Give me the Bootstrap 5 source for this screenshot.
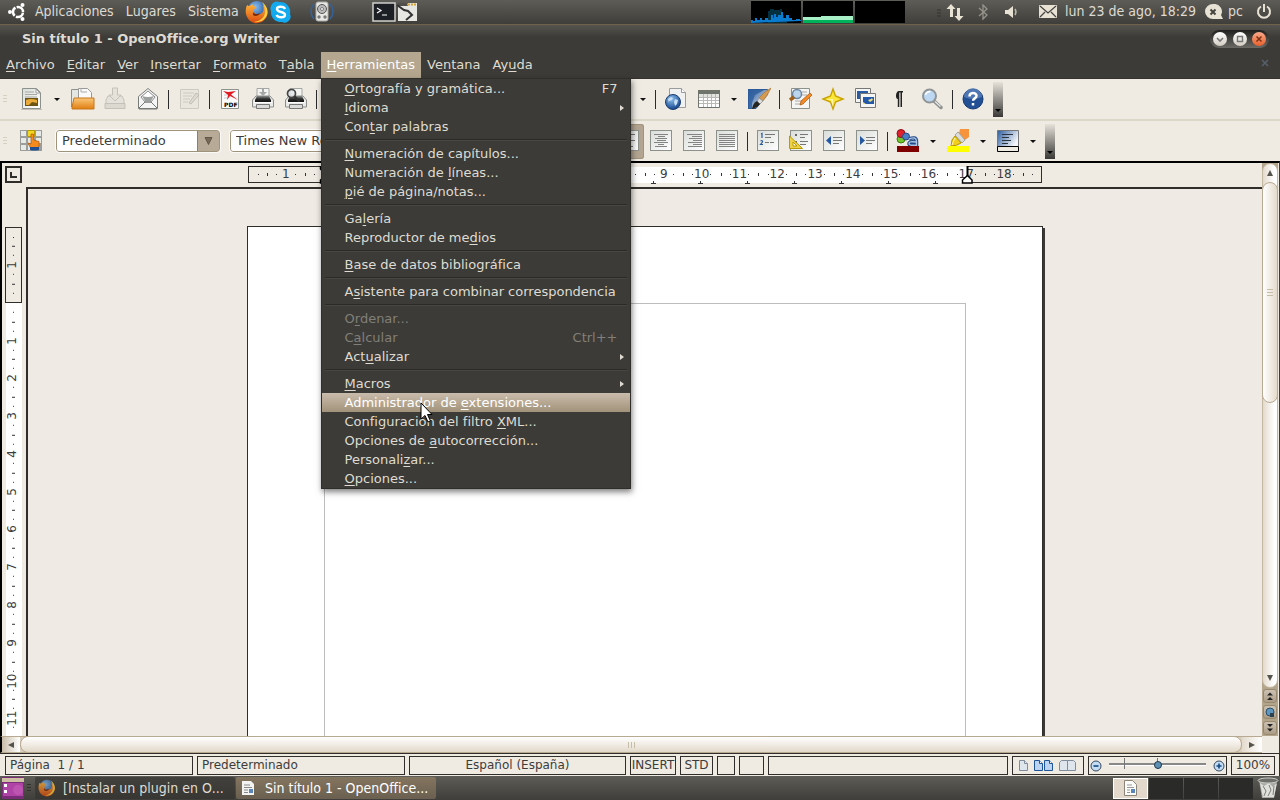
<!DOCTYPE html>
<html lang="es">
<head>
<meta charset="utf-8">
<meta name="viewport" content="width=device-width, initial-scale=1">
<title>Sin título 1 - OpenOffice.org Writer</title>
<link href="https://cdn.jsdelivr.net/npm/bootstrap@5.3.0/dist/css/bootstrap.min.css" rel="stylesheet">
<style>
:root{--dark:#3c3b37;--cream:#dfdbd2;--beige:#efebe3;--ink:#2f2e2b;--sand:#b5a78f}
body{font:13px/19px "DejaVu Sans",sans-serif;color:#3c3c3c;background:var(--beige)}
.no-kern{font-kerning:none}
.desk{height:100vh;min-width:1100px}
.btn{--bs-btn-padding-x:0;--bs-btn-padding-y:0;--bs-btn-border-width:0;--bs-btn-border-radius:0;--bs-btn-font-size:13px;--bs-btn-line-height:19px}
svg{display:block;flex:none}
.panel-bar{height:24px;background:linear-gradient(#5d5c57,#3f3e3a);color:var(--cream);font:14px/20px "DejaVu Sans Condensed","DejaVu Sans",sans-serif;font-kerning:none}
.panel-bar a{color:inherit;text-decoration:none;padding-bottom:2px}
.panel-top{height:25px;border-bottom:1px solid #6f614a}
.load{width:50px;height:22px;background:#000}
.title-bar{height:27px;background:linear-gradient(#55544f,var(--dark) 12px);color:var(--cream);font-weight:700}
.pill{width:59px;height:18px;border-radius:9px;background:linear-gradient(#20201e,#6b6a65);padding:0 3px}
.wbtn{width:14px;height:14px;border-radius:50%!important;background:linear-gradient(#fff,#d2ccc2)!important}
.wbtn.shut{background:linear-gradient(#f9a98a,#e8602c)!important}
.menu-bar{height:27px;background:var(--dark);border-bottom:1px solid #33322f}
.menu-bar>.nav-item>.nav-link{padding:3px 6px 4px;color:var(--cream);line-height:19px}
.menu-bar>.nav-item>.nav-link.show{background:var(--sand);color:#fff}
u{text-decoration-thickness:1px;text-underline-offset:2px}
.tools-menu.dropdown-menu{--bs-dropdown-min-width:310px;width:310px;top:26px;left:0;padding:0;border:1px solid #2f2e2b;border-radius:0;background:var(--dark);font-size:13px;box-shadow:1px 3px 6px rgba(0,0,0,.5);z-index:20}
.tools-menu .dropdown-item{padding:0 12px 0 23px;height:19px;line-height:19px;color:var(--cream)}
.tools-menu .dropdown-item.active{background:linear-gradient(#c9bcab,#a2927a);color:#fff}
.tools-menu .dropdown-item.disabled{color:#817f79}
.tools-menu .dropdown-divider{margin:3px 3px;height:2px;border:0;background:linear-gradient(#2b2a27 50%,#484742 50%);opacity:1}
.sub-arrow{width:0;height:0;border:3px solid transparent;border-left:4px solid var(--cream);border-right:0;margin-right:-6px}
.pointer{position:absolute;left:98px;top:323px;z-index:21;pointer-events:none}
.tool-row{height:40px}
.tool-row+.tool-row{border-top:2px solid;border-image:linear-gradient(#dcd8c8 50%,#f8f6f0 50%) 2;height:42px}
.grip{width:15px;height:8px;padding-left:3px}
.grip::before{content:"";display:block;width:4px;height:8px;background:repeating-linear-gradient(#d6d0c0 0 1px,transparent 1px 3px)}
.tb{width:33px;height:35px}
.tb svg{margin:auto}
.tb.pressed{background:#b3a591;border-radius:3px!important;box-shadow:inset 0 0 0 1px #a3947d}
.dd{width:17px;height:35px}
.dd::before{content:"";display:block;width:0;margin:auto;border:3px solid transparent;border-top:3px solid #111;border-bottom:0}
.bar-sep{width:8px;height:19px;background:linear-gradient(#2b2b2b,#2b2b2b) 4px 0/1px 100% no-repeat}
.more{width:10px;height:35px;margin-left:4px;background:linear-gradient(#e6e2da,#3a3936);padding-top:22px}
.more::before{content:"";display:block;width:0;margin:auto;border:3px solid transparent;border-top:3px solid #000;border-bottom:0}
.box-pick{height:22px;border:1px solid #a0937c;border-radius:3px;font-size:13px;line-height:18px;padding:0 24px 0 5px;color:#3c3c3c;appearance:none;outline:1px solid #fbfaf7;
background:url("data:image/svg+xml,%3Csvg xmlns='http://www.w3.org/2000/svg' width='9' height='8'%3E%3Cpath d='M1 .5h7L4.500 7.500z' fill='%23776b58' stroke='%23554b3c' stroke-width='.8'/%3E%3C/svg%3E") right 6px center no-repeat,linear-gradient(90deg,#8f8069 1px,#b7aa97 1px) right 0 top 0/22px 100% no-repeat,#fff}
.hold-a{width:314px}.hold-b{width:231px}
.work{border-top:2px solid #000;border-left:2px solid #000;border-right:1px solid #3c3b37;min-height:0}
.ruler-row{height:24px}
.corner{width:17px;height:17px;border:2px solid var(--ink);margin:3px 6px 0 3px}
.corner::before{content:"";display:block;width:7px;height:6px;margin:3px 0 2px 3px;border:solid var(--ink);border-width:0 0 2px 2px}
.h-ruler{width:794px;height:17px;display:grid}
.h-ruler>*{grid-area:1/1}
.edge{border:1px solid var(--ink)}
.inner{background:#fff;margin-top:1px}
.tabs-line{height:4px;margin:14px 0 -2px;background:repeating-linear-gradient(90deg,#333 0 1px,transparent 1px 47px) 0 0/100% 3px no-repeat,repeating-linear-gradient(90deg,#333 0 3px,transparent 3px 45px,#333 45px 47px) 0 2px/100% 1px no-repeat}
.marks{padding:0 19px;font-size:12px;line-height:17px;background:linear-gradient(#333,#333) 10px 8px/1px 1px no-repeat,linear-gradient(#333,#333) right 18px top 7px/1px 3px no-repeat,linear-gradient(#333,#333) right 9px top 8px/1px 1px no-repeat}
.mark-cell{flex:1 1 0;text-align:center;background:linear-gradient(#333,#333) 0 7px/1px 3px no-repeat,linear-gradient(#333,#333) 25% 8px/1px 1px no-repeat,linear-gradient(#333,#333) 75% 8px/1px 1px no-repeat}
.stop-mark{position:absolute;left:713px;top:0}
.start-mark{position:absolute;left:71px;top:0}
.v-col{width:24px;overflow:hidden;padding:40px 5px 0 3px}
.v-ruler{height:1124px;width:17px;display:grid}
.v-ruler>*{grid-area:1/1}
.marks-v{padding:19px 0 47px;font-size:12px;line-height:15px;background:linear-gradient(#333,#333) 8px 10px/1px 1px no-repeat}
.marks-v .mark-cell{writing-mode:vertical-rl;transform:rotate(180deg);width:17px;background:linear-gradient(#333,#333) 7px 100%/3px 1px no-repeat,linear-gradient(#333,#333) 8px 25%/1px 1px no-repeat,linear-gradient(#333,#333) 8px 75%/1px 1px no-repeat}
.canvas{border:solid var(--ink);border-width:2px 0 0 2px;overflow:hidden;background:#efeae4;padding-top:37px}
.sheet{width:796px;height:1123px;background:#fff;border:1px solid var(--ink);box-shadow:2px 2px 0 #3a3936;padding:76px}
.text-frame{height:100%;border:1px solid #bdbdbd}
.v-scroll{width:16px;background:#b3a48c;margin-right:1px}
.v-track{background:linear-gradient(90deg,#e3dacd,#fff 80%);border-radius:8px;border:1px solid #c4b79f}
.v-thumb{height:221px;border:1px solid #b8aa90;border-radius:8px;background:linear-gradient(90deg,#fff,#e4dacb);margin:0 -1px}
.sc{width:14px;height:18px}
.sc svg{margin:auto}
.jump{height:14px;width:14px;margin:1px;border:1px solid #978870!important;border-radius:3px!important;background:linear-gradient(#cdc2b2,#ab9c86)!important}
.jump svg{margin:auto}
.h-scroll{height:17px;background:#d9cfc0;border:solid #b8aa90;border-width:1px 0;border-left:2px solid #000}
.h-thumb{border:1px solid #b8aa90;border-radius:8px;background:linear-gradient(#fff,#e2d8c9);margin:-1px 0}
.h-end{width:18px;height:15px;background:linear-gradient(90deg,#c9bda9,#fff)}
.h-end.last{width:20px;background:linear-gradient(90deg,#e3dacd,#fff)}
.v-lines{width:7px;height:6px;background:repeating-linear-gradient(90deg,#c6bca8 0 1px,transparent 1px 3px)}
.h-lines{width:6px;height:7px;background:repeating-linear-gradient(#c6bca8 0 1px,transparent 1px 3px)}
.status{height:23px;border-top:1px solid var(--ink);padding:2px 4px 1px 5px;gap:4px;font-size:12px;line-height:17px;border-right:1px solid var(--ink)}
.cell{border:1px solid var(--ink);white-space:pre;overflow:hidden;height:19px}
.zoomer{appearance:none;width:97px;height:15px;margin:0 7px;background:linear-gradient(#777,#777) 15px 0/1px 11px no-repeat,linear-gradient(#777,#777) 48px 0/1px 11px no-repeat,linear-gradient(#888 2px,#fff 2px) 0 5px/100% 3px no-repeat}
.zoomer::-webkit-slider-thumb{appearance:none;width:8px;height:8px;border-radius:50%;border:1px solid #1d3a50;background:#5e90b4;margin-top:-2px}
.task{height:22px;width:200px;border-radius:2px!important;background:linear-gradient(#42413d,#373632)!important;color:var(--cream)!important;font:14px/22px "DejaVu Sans Condensed","DejaVu Sans",sans-serif!important;font-kerning:none!important;text-align:left!important}
.task.current{background:linear-gradient(#84755f,#6a5f50)!important;color:#fff!important}
.pg{width:34px;height:21px;background:#2a2a28!important}
.pg.here{background:#e2d8cb!important;border:1px solid #fff!important;width:35px}
</style>
</head>
<body>
<svg width="0" height="0" class="position-absolute" aria-hidden="true">
<defs>
<linearGradient id="gPaper" x1="0" y1="0" x2="1" y2="1"><stop offset="0" stop-color="#d9ddd9"/><stop offset="1" stop-color="#fff"/></linearGradient>
<linearGradient id="gFold" x1="0" y1="0" x2="0" y2="1"><stop offset="0" stop-color="#fbc778"/><stop offset="1" stop-color="#e07e14"/></linearGradient>
<linearGradient id="gBlue" x1="0" y1="0" x2="1" y2="1"><stop offset="0" stop-color="#2d5d9f"/><stop offset="1" stop-color="#e3ebf4"/></linearGradient>
<linearGradient id="gBlueH" x1="0" y1="0" x2="1" y2=".5"><stop offset="0" stop-color="#2d5d9f"/><stop offset="1" stop-color="#f4f6fa"/></linearGradient>
<linearGradient id="gMetal" x1="0" y1="0" x2="0" y2="1"><stop offset="0" stop-color="#8b8e8c"/><stop offset=".5" stop-color="#2c2d2d"/><stop offset="1" stop-color="#111"/></linearGradient>
<radialGradient id="gGlobe" cx=".4" cy=".3" r=".7"><stop offset="0" stop-color="#8cc0f0"/><stop offset="1" stop-color="#16458c"/></radialGradient>
<linearGradient id="gFox" x1="0" y1="0" x2="0" y2="1"><stop offset="0" stop-color="#ffb43a"/><stop offset="1" stop-color="#d9480f"/></linearGradient>
<symbol id="sheetIcon" viewBox="0 0 24 24"><rect x="1.500" y="1.500" width="21" height="20" fill="url(#gPaper)" stroke="#8d918c"/></symbol>
<symbol id="printer" viewBox="0 0 24 24"><path d="M6 12V1.500h12V12" fill="#f4f4f2" stroke="#a5a7a4"/><path d="M1.500 13l3.500-4h14l3.500 4v7h-21z" fill="#e9e9e7" stroke="#8b8e8a"/><path d="M4 13l2-4h12l2 4v2H4z" fill="url(#gMetal)"/><path d="M3 15.500h18" stroke="#fff"/><path d="M5.500 17.500h13v4h-13z" fill="#dadad8" stroke="#777"/></symbol>
<symbol id="firefox" viewBox="0 0 24 24"><circle cx="12" cy="11" r="10" fill="url(#gGlobe)"/><path d="M2 5c1 1 2 1 3 1C7 3 9 5 8 6c2 0 3 1 3 2-2 1-3 2-2 4 1 3 5 4 8 1 2-2 2-5 1-8 4 3 6 8 3 13-4 6-12 7-17 2C0 15 0 10 2 5z" fill="url(#gFox)"/><path d="M17 2c4 3 6 7 5.500 11C21 20 15 23 9 22c6-1 10-4 11-9 1-4-1-8-3-11z" fill="#ffcf3f"/><path d="M8 12c1 2 4 3 7 1-1 3-5 4-7 2z" fill="#7c2b08"/></symbol>
</defs>
</svg>
<div class="desk d-flex flex-column overflow-hidden">

<!-- desktop panel -->
<header class="panel-bar panel-top d-flex align-items-center flex-shrink-0">
  <svg width="18" height="18" viewBox="0 0 18 18" style="margin-left:8px"><circle cx="10" cy="9" r="5" fill="none" stroke="#fff" stroke-width="2.500" stroke-dasharray="9.200 1.300" stroke-dashoffset="-.6"/><circle cx="2" cy="9" r="2" fill="#fff"/><circle cx="14.500" cy="2" r="2" fill="#fff"/><circle cx="14.500" cy="16" r="2" fill="#fff"/></svg>
  <nav class="d-flex" style="gap:12px;margin-left:9px"><a href="#">Aplicaciones</a><a href="#">Lugares</a><a href="#">Sistema</a></nav>
  <svg width="24" height="24" style="margin-left:6px"><use href="#firefox"/></svg>
  <svg width="22" height="22" viewBox="0 0 22 22" style="margin-left:1px"><path d="M1 5a6 6 0 0 1 8-4 10 10 0 0 1 11 12 6 6 0 0 1-8 8A10 10 0 0 1 1 10 6 6 0 0 1 1 5z" fill="#12a9ee"/><path d="M15 8c-1-3-8-3-8 0 0 4 8 2 8 6 0 3-7 3-8.500 0" fill="none" stroke="#fff" stroke-width="2.400"/></svg>
  <svg width="24" height="22" viewBox="0 0 24 22" style="margin-left:18px"><path d="M4 3a11 11 0 0 0 0 15M20 3a11 11 0 0 1 0 15" stroke="#35619b" stroke-width="1.500" fill="none"/><rect x="6" y="1" width="12" height="19" rx="2" fill="#e8e8e4" stroke="#aaa"/><circle cx="12" cy="8" r="4.500" fill="#bbb" stroke="#555"/><circle cx="12" cy="8" r="1.500" fill="#fff" stroke="#777"/><circle cx="9" cy="16" r="1.700" fill="#777"/><circle cx="15" cy="16" r="1.700" fill="#777"/></svg>
  <svg width="24" height="20" viewBox="0 0 24 20" style="margin-left:38px"><rect x="1" y="1" width="22" height="18" fill="#1c2024" stroke="#d0d0cc" stroke-width="1.500"/><path d="M5 6l4 2.500L5 11M10 13h5" stroke="#fff" fill="none" stroke-width="1.200"/></svg>
  <svg width="22" height="20" viewBox="0 0 22 20"><rect x="2" y="1" width="19" height="18" fill="#e6e6e2"/><path d="M2 1h10v3H2z" fill="#4f4e4a"/><path d="M11 1.500h3v2h-3zM15 1.500h2v2h-2zM18 1.500h2v2h-2z" fill="#d8a233"/><path d="M1 3l7 5 4 1 4 4-6 5" fill="none" stroke="#333" stroke-width="2"/></svg>
  <div class="ms-auto d-flex align-items-center">
    <div class="d-flex" style="gap:2px">
      <div class="load"><svg width="50" height="22"><path d="M17 22V10h2V8h4V9h6V8h2v6h2v3h3v5z" fill="#04303f"/><path d="M0 22v-3h2v1h2v-3h2v2h3v-2h2v2h3v-2h3v2h3v-5h2v3h1v-4h2v3h2v-2h3v-3h2v6h3v-3h3v3h3v2h4v-1h4v1h3v1z" fill="#0b7bd0"/></svg></div>
      <div class="load"><svg width="50" height="22"><path d="M0 16h18v-1h32v4H0z" fill="#a7f0c8"/><path d="M0 19h50v3H0z" fill="#00b25a"/></svg></div>
      <div class="load"></div>
    </div>
    <svg width="60" height="22" viewBox="0 0 60 22"><path d="M32 9h4M32 12h4M32 15h4" stroke="#33322f"/><path d="M46 3l4.500 5H48v8h-3V8h-3.500zM54 20l-4.500-5H52V7h3v8h3.500z" fill="#e8e2d4"/></svg>
    <svg width="10" height="16" viewBox="0 0 10 16" style="margin-left:13px"><path d="M1 4l8 7-4 4V1l4 4-8 7" fill="none" stroke="#97948b" stroke-width="1.300"/></svg>
    <svg width="16" height="14" viewBox="0 0 16 14" style="margin-left:16px"><path d="M1 5h3l5-4v12L4 9H1z" fill="#e8e2d4"/><path d="M11 4q2 3 0 6" stroke="#bbb6aa" fill="none" stroke-width="1.500"/></svg>
    <svg width="18" height="14" viewBox="0 0 18 14" style="margin-left:19px"><rect width="18" height="13" rx="1" fill="#e8e2d4"/><path d="M1 1l8 7 8-7M1 12l5-5M17 12l-5-5" fill="none" stroke="#44433f" stroke-width="1.200"/></svg>
    <a href="#" style="margin-left:8px">lun 23 de ago, 18:29</a>
    <svg width="18" height="16" viewBox="0 0 18 16" style="margin-left:9px"><path d="M8 0a8 7.500 0 0 1 8 11l2 4H8A8 7.500 0 0 1 8 0z" fill="#e8e2d4"/><path d="M5.500 5.500l5 5M10.500 5.500l-5 5" stroke="#44433f" stroke-width="2"/></svg>
    <a href="#" style="margin-left:5px">pc</a>
    <svg width="16" height="16" viewBox="0 0 16 16" style="margin:0 8px 0 13px"><path d="M5 2.500a6 6 0 1 0 6 0M8 0v8" fill="none" stroke="#e8e2d4" stroke-width="2"/></svg>
  </div>
</header>

<!-- window title -->
<div class="title-bar d-flex align-items-center justify-content-between flex-shrink-0">
  <div style="margin-left:22px">Sin título 1 - OpenOffice.org Writer</div>
  <div class="pill d-flex align-items-center justify-content-between" style="margin-right:11px">
    <button class="btn wbtn" aria-label="Minimizar"><svg width="14" height="14"><path d="M4 6l3 3 3-3" fill="none" stroke="#777" stroke-width="1.600"/></svg></button>
    <button class="btn wbtn" aria-label="Maximizar"><svg width="14" height="14"><path d="M4.500 4.500h5v5h-5z" fill="none" stroke="#777" stroke-width="1.400"/></svg></button>
    <button class="btn wbtn shut" aria-label="Cerrar"><svg width="14" height="14"><path d="M4.500 4.500l5 5M9.500 4.500l-5 5" stroke="#7a3216" stroke-width="1.500"/></svg></button>
  </div>
</div>

<!-- menu bar -->
<ul class="menu-bar nav flex-nowrap flex-shrink-0 position-relative">
  <li class="nav-item"><a class="nav-link" href="#"><u>A</u>rchivo</a></li>
  <li class="nav-item"><a class="nav-link" href="#"><u>E</u>ditar</a></li>
  <li class="nav-item"><a class="nav-link" href="#"><u>V</u>er</a></li>
  <li class="nav-item"><a class="nav-link" href="#"><u>I</u>nsertar</a></li>
  <li class="nav-item"><a class="nav-link" href="#"><u>F</u>ormato</a></li>
  <li class="nav-item no-kern"><a class="nav-link" href="#">T<u>a</u>bla</a></li>
  <li class="nav-item dropdown">
    <a class="nav-link show" href="#" aria-expanded="true"><u>H</u>erramientas</a>
    <ul class="tools-menu dropdown-menu show">
      <li><a class="dropdown-item d-flex justify-content-between" href="#"><span><u>O</u>rtografía y gramática...</span><span>F7</span></a></li>
      <li><a class="dropdown-item d-flex justify-content-between align-items-center" href="#"><span><u>I</u>dioma</span><span class="sub-arrow"></span></a></li>
      <li><a class="dropdown-item" href="#">Con<u>t</u>ar palabras</a></li>
      <li><hr class="dropdown-divider"></li>
      <li><a class="dropdown-item" href="#"><u>N</u>umeración de capítulos...</a></li>
      <li><a class="dropdown-item" href="#">Numeración de <u>l</u>íneas...</a></li>
      <li><a class="dropdown-item" href="#"><u>p</u>ié de página/notas...</a></li>
      <li><hr class="dropdown-divider"></li>
      <li><a class="dropdown-item" href="#">Ga<u>l</u>ería</a></li>
      <li><a class="dropdown-item" href="#">Reproductor de me<u>d</u>ios</a></li>
      <li><hr class="dropdown-divider"></li>
      <li><a class="dropdown-item" href="#"><u>B</u>ase de datos bibliográfica</a></li>
      <li><hr class="dropdown-divider"></li>
      <li><a class="dropdown-item" href="#">A<u>s</u>istente para combinar correspondencia</a></li>
      <li><hr class="dropdown-divider"></li>
      <li><a class="dropdown-item disabled" href="#">O<u>r</u>denar...</a></li>
      <li><a class="dropdown-item disabled d-flex justify-content-between" href="#"><span>C<u>a</u>lcular</span><span>Ctrl++</span></a></li>
      <li><a class="dropdown-item d-flex justify-content-between align-items-center" href="#"><span>Act<u>u</u>alizar</span><span class="sub-arrow"></span></a></li>
      <li><hr class="dropdown-divider"></li>
      <li><a class="dropdown-item d-flex justify-content-between align-items-center" href="#"><span><u>M</u>acros</span><span class="sub-arrow"></span></a></li>
      <li><a class="dropdown-item active" href="#">Administrador de <u>e</u>xtensiones...</a></li>
      <li><a class="dropdown-item" href="#">Configuración del filtro <u>X</u>ML...</a></li>
      <li><a class="dropdown-item" href="#">Opciones de <u>a</u>utocorrección...</a></li>
      <li><a class="dropdown-item" href="#">Personali<u>z</u>ar...</a></li>
      <li><a class="dropdown-item" href="#"><u>O</u>pciones...</a></li>
      <li class="pointer"><svg width="14" height="22" viewBox="0 0 14 22"><path d="M1 1v16l4-3.500 3 6.500 2.500-1-3-6.500H12z" fill="#fff" stroke="#000"/></svg></li>
    </ul>
  </li>
  <li class="nav-item"><a class="nav-link" href="#">Ve<u>n</u>tana</a></li>
  <li class="nav-item"><a class="nav-link" href="#">Ay<u>u</u>da</a></li>
  <li class="nav-item ms-auto align-self-center"><button class="btn d-block mb-1" aria-label="Cerrar documento" style="margin-right:11px"><svg width="8" height="8"><path d="M1 1l6 6M7 1L1 7" stroke="#56606b" stroke-width="1.600"/></svg></button></li>
</ul>

<!-- standard toolbar -->
<div class="tool-row d-flex align-items-center flex-shrink-0" role="toolbar">
  <div class="grip"></div>
  <button class="btn tb" aria-label="Nuevo"><svg width="24" height="24"><path d="M2.500 1.500h14l4 4v16h-18z" fill="url(#gPaper)" stroke="#8d918c"/><path d="M16 2l4 4h-4z" fill="#fff" stroke="#999"/><path d="M5 5h9M5 7.500h12M5 10h12" stroke="#a5a8a4"/><path d="M5 11h13v8H5z" fill="#6d5314"/><path d="M6 13q5-2 11 0v3l-5-1-3 3H6z" fill="#e9aa3a"/><path d="M1 22.500h21" stroke="#c2beb5"/></svg></button>
  <button class="btn dd" aria-label="Más tipos"></button>
  <button class="btn tb" aria-label="Abrir"><svg width="26" height="24"><path d="M2.500 20V2.500h7l2 2v10" fill="#e4e6e4" stroke="#8d918c"/><path d="M9.500 1.500h9l4 4V14h-13z" fill="#fafafa" stroke="#999"/><path d="M12 1v4h6" fill="none" stroke="#aaa"/><path d="M3 20L5 11h20v11H3z" fill="url(#gFold)" stroke="#c8761b"/></svg></button>
  <button class="btn tb" aria-label="Guardar" disabled><svg width="24" height="24"><path d="M3 13l2-4h14l2 4v8H3z" fill="#e0ded7" stroke="#aeaba3"/><path d="M9.500 1h5v7H18l-6 6-6-6h3.500z" fill="#e0ded6" stroke="#aeaba3"/><path d="M2 16.500h20v5H2z" fill="#d3d0c8" stroke="#aeaba3"/></svg></button>
  <button class="btn tb" aria-label="Correo"><svg width="24" height="24"><path d="M2.500 9.500L12 1.500l9.500 8v12h-19z" fill="#f4f5f4" stroke="#777b78"/><path d="M5 10l7-6 7 6-4 5H9z" fill="#fff" stroke="#888"/><path d="M6 9q6 2 12 0l-3 5H9z" fill="#9da19f"/><path d="M3 21l6-6h6l6 6" fill="none" stroke="#777b78"/><path d="M3 22.500h18" stroke="#b4b1a9"/></svg></button>
  <div class="bar-sep"></div>
  <button class="btn tb" aria-label="Modo de edición" disabled><svg width="24" height="24"><path d="M3.500 2.500h18v19h-18z" fill="#e6e4dc" stroke="#bcb9b0"/><path d="M6 6h11M6 9h9M6 12h7M6 15h5" stroke="#bbb9b1"/><path d="M12 16l7-10 3 2-8 9z" fill="#d5d2c9" stroke="#a9a69e"/></svg></button>
  <div class="bar-sep"></div>
  <button class="btn tb" aria-label="Exportar a PDF"><svg width="24" height="24"><path d="M3.500 2.500h17v19h-17z" fill="#fafafa" stroke="#8d918c"/><path d="M5 4l5 1 8-1-5 3.500 7 5.500-8-4-3 4 1-5z" fill="#e21a22"/><path d="M6 8h3M6 11h3" stroke="#ccc"/><text x="6" y="20" font-family="DejaVu Sans" font-weight="700" font-size="6" fill="#000">PDF</text></svg></button>
  <button class="btn tb" aria-label="Imprimir"><svg width="24" height="24"><use href="#printer"/><path d="M11 2h2v3h3l-4 4-4-4h3z" fill="#a4a7a5"/></svg></button>
  <button class="btn tb" aria-label="Vista preliminar"><svg width="24" height="24"><use href="#printer"/><circle cx="7.500" cy="6.500" r="4" fill="#e1e5e7" fill-opacity=".8" stroke="#444" stroke-width="1.700"/><path d="M10.500 9.500l5 5" stroke="#333" stroke-width="2.400"/></svg></button>
  <div class="bar-sep"></div>
  <div class="hold-a flex-shrink-0"></div>
  <button class="btn dd" aria-label="Rehacer varias"></button>
  <div class="bar-sep"></div>
  <button class="btn tb" aria-label="Hiperenlace"><svg width="24" height="24"><path d="M5.500 1.500h12l4 4v15h-16z" fill="#f0f1f0" stroke="#999c98"/><path d="M17.500 1.500v4h4" fill="#fff" stroke="#999"/><circle cx="9" cy="15" r="7.500" fill="url(#gGlobe)" stroke="#1b3d70"/><path d="M4 12l3-2 2 1-1 2-3 1v2zM11 12l3 1-1 4-2 2-1-4z" fill="#c9def2"/></svg></button>
  <button class="btn tb" aria-label="Tabla"><svg width="24" height="24"><path d="M1.500 3.500h21v17h-21z" fill="#fff" stroke="#70746e"/><path d="M1 3h22v4H1z" fill="#6f756b"/><path d="M2 7h20v3H2z" fill="#e0e3de"/><path d="M2 10.500h20M2 13.500h20M2 16.500h20M6.500 7v13M10.500 7v13M14.500 7v13M18.500 7v13" stroke="#b7bab4"/></svg></button>
  <button class="btn dd" aria-label="Tamaño de tabla"></button>
  <button class="btn tb" aria-label="Dibujo"><svg width="24" height="24"><path d="M1.500 2.500h19v5L9 21.500H1.500z" fill="url(#gBlue)" stroke="#2f5b96"/><path d="M1 2h18L8 8 5 16v6H1z" fill="#2d5c9c" opacity=".8"/><path d="M24 1q-3 7-8 13l-4-3Q18 4 24 1z" fill="#d49a52" stroke="#a66f2d" stroke-width=".6"/><path d="M12 11l4 3-3 3-3-2z" fill="#ddd" stroke="#888" stroke-width=".6"/><path d="M10 14l3 3q-3 4-8 5 1-6 5-8z" fill="#26251f"/></svg></button>
  <div class="bar-sep"></div>
  <button class="btn tb" aria-label="Buscar"><svg width="24" height="24"><path d="M3.500 1.500h18v20h-18z" fill="#f5f5f4" stroke="#8d918c"/><path d="M14 5h5M14 8h5M7 14h9M7 17h7" stroke="#aaa"/><circle cx="9" cy="7" r="4.500" fill="#bcd5ee" stroke="#6d87a3" stroke-width="1.500"/><path d="M6 10l-4 3" stroke="#a0611c" stroke-width="3.500"/><path d="M12 18l1-4 9-8 2 2-9 9z" fill="#f38a26" stroke="#a8560d" stroke-width=".7"/></svg></button>
  <button class="btn tb" aria-label="Navegador"><svg width="24" height="24"><path d="M12 2l2.500 7 7.500 3-7.500 3-2.500 7-2.500-7L2 12l7.500-3z" fill="#fbe73a" stroke="#c8a200" stroke-width="1.400"/><path d="M12 4v8H4l6 1 2 7z" fill="#fff" opacity=".6"/></svg></button>
  <button class="btn tb" aria-label="Galería"><svg width="24" height="24"><path d="M1.500 1.500h15v14h-15z" fill="#f5f5f4" stroke="#777"/><path d="M3 4h11v8H3z" fill="#2a5ca6"/><path d="M6.500 6.500h15v14h-15z" fill="#f5f5f4" stroke="#777"/><path d="M9 10h11v7H9z" fill="#2458a8"/><path d="M9 15l3 2H9zM14 13l3-1 1-1 1 2-3 2z" fill="#f0df7a"/></svg></button>
  <button class="btn tb" aria-label="Caracteres no imprimibles"><svg width="24" height="24"><path d="M9 4h7v1.500h-1V20h-1.500V5.500h-1.200V20h-1.500v-8C8 12 8.500 4 12 4z" fill="#222"/></svg></button>
  <button class="btn tb" aria-label="Escala"><svg width="24" height="24"><path d="M14 14l7 6.500" stroke="#8e9190" stroke-width="3.500" stroke-linecap="round"/><path d="M15 14.500l5.500 5" stroke="#e9e9e8" stroke-width="1.200"/><circle cx="9.500" cy="9" r="6.500" fill="#bdd7f2" stroke="#8f9496" stroke-width="2"/><path d="M5.500 8a5 5 0 0 1 5-3.500" stroke="#fff" fill="none" stroke-width="1.500"/></svg></button>
  <div class="bar-sep"></div>
  <button class="btn tb" aria-label="Ayuda"><svg width="24" height="24"><circle cx="12" cy="12" r="10" fill="#234f94" stroke="#163a73"/><path d="M3 10a9 9 0 0 1 18 0q-9 4-18 0z" fill="#6c93c8" opacity=".6"/><path d="M8.500 9.500c0-4.500 7-4.500 7-.7 0 2.600-3.500 2.500-3.500 5M12 16v2.600" fill="none" stroke="#fff" stroke-width="2.500"/></svg></button>
  <button class="btn more" aria-label="Más botones"></button>
</div>

<!-- formatting toolbar -->
<div class="tool-row d-flex align-items-center flex-shrink-0" role="toolbar">
  <div class="grip"></div>
  <button class="btn tb" aria-label="Estilo y formato"><svg width="24" height="24"><path d="M0 1h22v21H0z" fill="#9a9d99"/><path d="M1 2h5v5H1zM16 2h5v5h-5zM1 9h5v5H1zM16 9h5v5h-5zM1 16h5v5H1zM8 16h6v5H8zM8 9h6v5H8z" fill="#e6e9e6"/><path d="M7.500 1.500h7v6h-7z" fill="#f3d823" stroke="#b99a00"/><path d="M11 5h2.500v6l5.500 1.500V17l-2 3h-6L8 14l3 1z" fill="#f58a1f" stroke="#b45a06" stroke-width=".7"/><path d="M10 18h9v3q-5 1-9 0z" fill="#214f92"/></svg></button>
  <select class="box-pick ms-2" style="width:164px" aria-label="Estilo"><option>Predeterminado</option></select>
  <select class="box-pick" style="width:150px;margin-left:10px" aria-label="Fuente"><option>Times New Roman</option></select>
  <div class="hold-b flex-shrink-0"></div>
  <button class="btn tb pressed" aria-label="Izquierda"><svg width="24" height="24"><use href="#sheetIcon"/><path d="M5 5.500h14M5 8.500h9M5 11.500h14M5 14.500h9M5 17.500h12" stroke="#777"/></svg></button>
  <button class="btn tb" aria-label="Centrado"><svg width="24" height="24"><use href="#sheetIcon"/><path d="M5 5.500h14M9 7.500h7M6 9.500h12M8 11.500h9M5 13.500h14M9 15.500h6M6 17.500h12" stroke="#777" stroke-width=".9"/></svg></button>
  <button class="btn tb" aria-label="Derecha"><svg width="24" height="24"><use href="#sheetIcon"/><path d="M5 5.500h15M10 7.500h10M7 9.500h13M11 11.500h9M6 13.500h14M11 15.500h9M6 17.500h14" stroke="#777" stroke-width=".9"/></svg></button>
  <button class="btn tb" aria-label="Justificado"><svg width="24" height="24"><use href="#sheetIcon"/><path d="M4 5.500h16M4 7.500h16M4 9.500h16M4 11.500h16M4 13.500h16M4 15.500h16M4 17.500h16" stroke="#777" stroke-width=".9"/></svg></button>
  <div class="bar-sep"></div>
  <button class="btn tb" aria-label="Numeración"><svg width="24" height="24"><use href="#sheetIcon"/><path d="M5 5l1-.5V9M4.500 12q2.500-1 2 1l-2 2.500H7" stroke="#2b5a9b" fill="none" stroke-width="1.200"/><path d="M9 5.500h10M9 8.500h6M9 13.500h4M14 13.500h4" stroke="#777"/></svg></button>
  <button class="btn tb" aria-label="Viñetas"><svg width="24" height="24"><use href="#sheetIcon"/><path d="M6 5h2v2H6zM6 12h2v2H6z" fill="#666"/><path d="M11 5.500h8M11 8.500h5M11 12.500h8M11 15.500h6" stroke="#777"/><path d="M.5 7v12.500h13z" fill="#ecd34b" stroke="#b99a00"/><path d="M4 13v4h4z" fill="#fff" stroke="#b99a00"/></svg></button>
  <button class="btn tb" aria-label="Reducir sangría"><svg width="24" height="24"><use href="#sheetIcon"/><path d="M9 7v9l-5-4.500z" fill="#2458a0"/><path d="M11 8.500h9M11 11.500h9M11 14.500h6" stroke="#777"/></svg></button>
  <button class="btn tb" aria-label="Aumentar sangría"><svg width="24" height="24"><use href="#sheetIcon"/><path d="M5 7v9l5-4.500z" fill="#2458a0"/><path d="M11 8.500h9M11 11.500h9M11 14.500h6" stroke="#777"/></svg></button>
  <div class="bar-sep"></div>
  <button class="btn tb" aria-label="Color de carácter"><svg width="24" height="24"><circle cx="5" cy="10" r="4" fill="#72c52c" stroke="#3f7d12"/><circle cx="5" cy="4.500" r="4" fill="#e0222e" stroke="#8f0f18"/><circle cx="10" cy="7.500" r="3.500" fill="#4a7fc4" stroke="#234b86"/><path d="M13 10q7-3 7.500 2v5M20 13q-7-1-7 1.500t7 1.500" fill="none" stroke="#234b86" stroke-width="3.500"/><path d="M13 10q7-3 7.500 2v5M20 13q-7-1-7 1.500t7 1.500" fill="none" stroke="#a9c4e6" stroke-width="1.400"/><path d="M1 17h22v6H1z" fill="#800000"/></svg></button>
  <button class="btn dd" aria-label="Más colores"></button>
  <button class="btn tb" aria-label="Resaltado"><svg width="24" height="24"><path d="M14 0h9v8l-4 3-6-7z" fill="#f7933b"/><path d="M12 3l7 8-3 3-7-8z" fill="#dcdcd8" stroke="#888" stroke-width=".7"/><path d="M9 7l6 7q-4 3-10 3 0-7 4-10z" fill="#f2cf1e" stroke="#b39700"/><path d="M9 9q-2 4-3 7" stroke="#fff6b0" fill="none"/><path d="M1 17h22v6H1z" fill="#ff0"/></svg></button>
  <button class="btn dd" aria-label="Más resaltados"></button>
  <button class="btn tb" aria-label="Color de fondo"><svg width="24" height="24"><path d="M1.500 1.500h21v16h-21z" fill="url(#gBlueH)" stroke="#777"/><path d="M6 5.500h11M6 8.500h7M6 11.500h9M6 14.500h6" stroke="#2c343f"/><path d="M1.500 17.500h21v5h-21z" fill="#efebe3" stroke="#000"/></svg></button>
  <button class="btn dd" aria-label="Más fondos"></button>
  <button class="btn more" aria-label="Más botones"></button>
</div>

<!-- document area -->
<main class="work d-flex flex-grow-1">
  <div class="d-flex flex-column flex-grow-1 overflow-hidden">
    <div class="ruler-row d-flex flex-shrink-0">
      <button class="btn corner flex-shrink-0" aria-label="Tabulación"></button>
      <div class="h-ruler mx-auto position-relative" style="margin-top:3px">
        <div class="d-flex"><div class="edge" style="width:76px"></div><div class="inner flex-grow-1"><div class="tabs-line"></div></div><div class="edge" style="width:75px"></div></div>
        <div class="marks d-flex" id="marksH"></div>
        <svg class="stop-mark" width="14" height="18"><path d="M6.500 0v12" stroke="#000" stroke-width="2"/><path d="M1.500 17v-3l5-4.500 4.500 4.500v3z" fill="#fff" stroke="#000" stroke-width="1.500"/></svg>
        <svg class="start-mark" width="12" height="18"><path d="M1.500 0v3l4.500 5 5-5V0zM1.500 17v-3l5-4.500 4.500 4.500v3z" fill="#fff" stroke="#000" stroke-width="1.500"/></svg>
      </div>
    </div>
    <div class="d-flex flex-grow-1" style="min-height:0">
      <div class="v-col flex-shrink-0" id="colV"><div class="v-ruler"><div class="d-flex flex-column"><div class="edge" style="height:76px"></div><div class="bg-white flex-grow-1" style="margin:0 0 0 1px"></div></div><div class="marks-v d-flex flex-column" id="marksV"></div></div></div>
      <div class="canvas flex-grow-1"><div class="sheet mx-auto"><div class="text-frame"></div></div></div>
    </div>
  </div>
  <div class="v-scroll d-flex flex-column flex-shrink-0">
    <div class="v-track d-flex flex-column flex-grow-1">
      <button class="btn sc" aria-label="Subir"><svg width="8" height="8"><path d="M1 7h6L4 1z" fill="#55534d"/></svg></button>
      <div class="v-thumb d-flex align-items-center justify-content-center"><div class="h-lines"></div></div>
      <button class="btn sc mt-auto" aria-label="Bajar"><svg width="8" height="8"><path d="M1 1h6L4 7z" fill="#55534d"/></svg></button>
    </div>
    <button class="btn jump" aria-label="Página anterior"><svg width="8" height="10"><path d="M1 4.500h6l-3-3zM1 9h6L4 6z" fill="#222"/></svg></button>
    <button class="btn jump" aria-label="Navegación"><svg width="10" height="10"><circle cx="5" cy="5" r="4" fill="#5f96bd" stroke="#274f6d"/><path d="M5 6h4v4H5z" fill="#2a4252"/></svg></button>
    <button class="btn jump" aria-label="Página siguiente"><svg width="8" height="10"><path d="M1 1h6L4 4zM1 5.500h6l-3 3z" fill="#222"/></svg></button>
  </div>
</main>
<div class="d-flex flex-shrink-0">
  <div class="h-scroll d-flex flex-grow-1">
    <button class="btn h-end" aria-label="Izquierda"><svg width="8" height="8" class="mx-auto"><path d="M7 1v6L1 4z" fill="#55534d"/></svg></button>
    <div class="h-thumb flex-grow-1 d-flex align-items-center justify-content-center"><div class="v-lines"></div></div>
    <button class="btn h-end last" aria-label="Derecha"><svg width="8" height="8" class="mx-auto"><path d="M1 1v6l6-3z" fill="#55534d"/></svg></button>
  </div>
  <div style="width:18px;border-right:1px solid #3c3b37"></div>
</div>

<!-- status bar -->
<div class="status d-flex flex-shrink-0">
  <div class="cell" style="width:188px;padding-left:4px">Página  1 / 1</div>
  <div class="cell" style="width:208px;padding-left:4px">Predeterminado</div>
  <div class="cell text-center" style="width:217px">Español (España)</div>
  <div class="cell text-center" style="width:46px">INSERT</div>
  <div class="cell text-center" style="width:33px">STD</div>
  <div class="cell" style="width:18px"></div>
  <div class="cell" style="width:25px"></div>
  <div class="cell flex-grow-1"></div>
  <div class="cell d-flex align-items-center justify-content-center" style="width:72px"><svg width="58" height="13"><g fill="#dfe5ec" stroke="#7e8c9c"><path d="M.5 1.500h5l3 3v7h-8z"/><path d="M5.500 1.500v3h3" /><path d="M40.500 3.500l2-2h6v10h-8zM48.500 1.500h6l2 2v8h-8z"/></g><g fill="#bcd3f2" stroke="#1f5596"><path d="M15.500 1.500h5l3 3v7h-8zM25.500 1.500h5l3 3v7h-8z"/><path d="M20.500 1.500v3h3M30.500 1.500v3h3" fill="#fff"/></g></svg></div>
  <div class="cell d-flex align-items-center justify-content-center" style="width:139px">
    <button class="btn" aria-label="Reducir"><svg width="12" height="12"><circle cx="6" cy="6" r="5" fill="#c4dcf3" stroke="#34495e"/><path d="M3.500 6h5" stroke="#12477f" stroke-width="1.600"/></svg></button>
    <input type="range" class="zoomer" min="0" max="100" value="50" aria-label="Escala">
    <button class="btn" aria-label="Ampliar"><svg width="12" height="12"><circle cx="6" cy="6" r="5" fill="#c4dcf3" stroke="#34495e"/><path d="M3.500 6h5M6 3.500v5" stroke="#12477f" stroke-width="1.600"/></svg></button>
  </div>
  <div class="cell text-center" style="width:44px">100%</div>
</div>

<!-- task list -->
<footer class="panel-bar d-flex align-items-center flex-shrink-0">
  <button class="btn" aria-label="Mostrar el escritorio" style="margin-left:2px"><svg width="22" height="22"><rect width="22" height="22" rx="1" fill="#7b2c78"/><path d="M0 1h22v4H0z" fill="#cdbfa4"/><path d="M1 6h20v13H1z" fill="#b044a6"/><circle cx="16" cy="13" r="5" fill="#d56fc6" opacity=".4"/><path d="M2 7h3v3H2zM2 13h3v3H2z" fill="#fff"/></svg></button>
  <svg width="11" height="12"><path d="M3 2.500h4M3 5.500h4M3 8.500h4" stroke="#33322f"/></svg>
  <button class="btn task d-flex align-items-center"><svg width="18" height="18" viewBox="0 0 24 24" style="margin:0 7px 0 3px" opacity=".75"><use href="#firefox" width="24" height="24"/></svg>[Instalar un plugin en O...</button>
  <button class="btn task current d-flex align-items-center" style="margin-left:1px"><svg width="14" height="16" style="margin:0 10px 0 5px"><path d="M1 1h9l3 3v11H1z" fill="#f3f3f1"/><path d="M3 5h6M3 7.500h8M3 10h4M3 12.500h4" stroke="#888"/><path d="M8 9h4v4H8z" fill="#5b84b8"/></svg>Sin título 1 - OpenOffice...</button>
  <div class="ms-auto d-flex align-items-center" style="gap:1px">
    <button class="btn pg here" aria-label="Escritorio 1"><svg width="13" height="16" class="mx-auto"><path d="M.5.5h8l4 4v11H.5z" fill="#fafaf8" stroke="#8a8578"/><path d="M3 5h5M3 7.500h7M3 10h3M3 12.500h3" stroke="#999"/><path d="M7 9h4v4H7z" fill="#5b84b8"/></svg></button>
    <button class="btn pg" aria-label="Escritorio 2"></button><button class="btn pg" aria-label="Escritorio 3"></button><button class="btn pg" aria-label="Escritorio 4"></button>
    <button class="btn" aria-label="Papelera" style="margin:0 1px 0 3px"><svg width="22" height="22"><path d="M2 3h18l-3 18H5z" fill="#a9aaa6"/><path d="M3 6l4 3 5-3 4 4 4-4-3 14H6z" fill="#dfe0dc"/><path d="M6 9l3 5-2 5M12 8l2 5-3 6M17 9l-1 9" stroke="#7c7d79" fill="none"/><ellipse cx="11" cy="3.500" rx="10" ry="2.500" fill="#6d6e6a" stroke="#c9cac6"/></svg></button>
  </div>
</footer>
</div>
<script src="https://cdn.jsdelivr.net/npm/bootstrap@5.3.0/dist/js/bootstrap.bundle.min.js"></script>
<script>
// one cell per centimetre, centred on its number; the page origin carries no number
function fill(id, from, to) {
  const row = document.getElementById(id);
  for (let n = from; n <= to; n++) {
    const c = document.createElement('div');
    c.className = 'mark-cell';
    c.dataset.n = n === 0 ? '\u00a0' : Math.abs(n);
    c.textContent = c.dataset.n;
    row.append(c);
  }
}
fill('marksH', -1, 18);
fill('marksV', -1, 26);
// numbers scrolled out below the vertical ruler are left blank
function trim() {
  const end = document.getElementById('colV').getBoundingClientRect().bottom;
  document.querySelectorAll('#marksV .mark-cell').forEach(c => {
    const r = c.getBoundingClientRect();
    c.textContent = (r.top + r.bottom) / 2 + 8 < end ? c.dataset.n : '';
  });
}
trim();
addEventListener('resize', trim);
</script>
</body>
</html>
